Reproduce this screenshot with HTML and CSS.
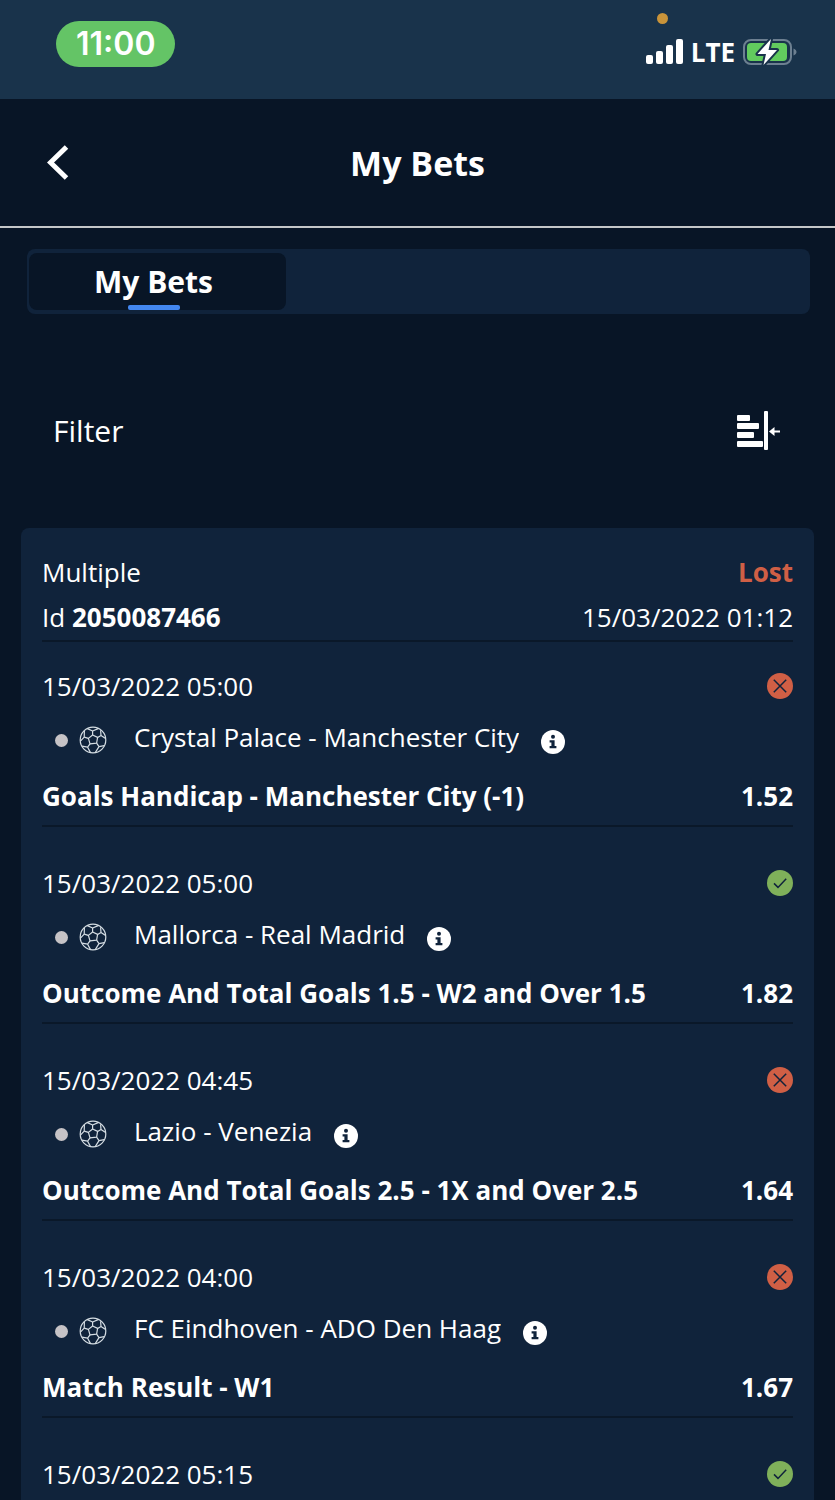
FILE: index.html
```html
<!DOCTYPE html>
<html lang="en">
<head>
    <meta charset="UTF-8">
    <meta name="viewport" content="width=device-width, initial-scale=1.0">
    <title>My Bets</title>
    <link rel="stylesheet" href="styles.css">
</head>
<body>

    <!-- shared icons -->
    <svg class="sprite" width="0" height="0" aria-hidden="true">
        <symbol id="ball" viewBox="0 0 28 28">
            <g fill="none" stroke="currentColor" stroke-width="1.2" stroke-linejoin="round">
                <circle cx="14" cy="14" r="12.8"/>
                <path d="M9.4 12.4L13.6 9L18.6 11.4L17.6 17.2L11 17.8Z"/>
                <path d="M13.6 9V5M18.6 11.4L22 9.400M17.6 17.2L20 20.600M11 17.8L8.600 21.200M9.4 12.4L5.200 11.200"/>
                <path d="M8.400 2.600L13.600 5L19.200 2.600M22 9.400L21.600 4.200M22 9.400L26.600 12.600M20 20.600L25.200 19.600M20 20.600L16.400 26.400M8.600 21.200L11.400 26.400M8.600 21.200L3 20.200M5.200 11.200L1.400 15.200M5.200 11.200L5.400 4.800"/>
            </g>
        </symbol>
        <symbol id="info" viewBox="0 0 24 24">
            <circle cx="12" cy="12" r="12" fill="#fff"/>
            <circle cx="12" cy="6.8" r="2" fill="#10233b"/>
            <path d="M8.600 10.2H13.6V16H15.4V18.2H8.600V16H10.4V12.4H8.600Z" fill="#10233b"/>
        </symbol>
        <symbol id="lost" viewBox="0 0 26 26">
            <circle cx="13" cy="13" r="13" fill="#d05f45"/>
            <path d="M6.8 6.8L19.2 19.2M19.2 6.8L6.8 19.2" stroke="#10233b" stroke-width="1.5"/>
        </symbol>
        <symbol id="won" viewBox="0 0 26 26">
            <circle cx="13" cy="13" r="13" fill="#7fb05a"/>
            <path d="M7 13.4L11 17.4L19.2 8.8" fill="none" stroke="#10233b" stroke-width="1.5"/>
        </symbol>
    </svg>

    <div class="status-bar">
        <div class="clock">11:00</div>
        <div class="status-right">
            <span class="mic-dot"></span>
            <svg class="signal" width="37" height="26" viewBox="0 0 37 26" fill="#fff">
                <rect x="0" y="16" width="7" height="9" rx="2"/>
                <rect x="10" y="12" width="7" height="13" rx="2"/>
                <rect x="20" y="6" width="7" height="19" rx="2"/>
                <rect x="30" y="0" width="7" height="25" rx="2"/>
            </svg>
            <span class="network">LTE</span>
            <svg class="battery" width="54" height="30" viewBox="0 0 54 30">
                <rect x="1" y="3" width="47" height="24" rx="7" fill="none" stroke="#6d8091" stroke-width="2"/>
                <path d="M50.5 11.5V18.5C54.5 17 54.5 13 50.5 11.5Z" fill="#6d8091"/>
                <rect x="4" y="6" width="40" height="18" rx="4" fill="#62cb5e"/>
                <path d="M28 2L14.5 17H23L20.5 28L34 13H25.5Z" fill="#fff" stroke="#19334b" stroke-width="4" stroke-linejoin="round" paint-order="stroke"/>
            </svg>
        </div>
    </div>

    <header class="header">
        <button class="back" type="button" aria-label="Back">
            <svg width="22" height="36" viewBox="0 0 22 36">
                <path d="M19.5 2L3.5 17.500L19.5 33" fill="none" stroke="#fff" stroke-width="5"/>
            </svg>
        </button>
        <h1>My Bets</h1>
    </header>

    <nav class="tabs">
        <button class="tab active" type="button">My Bets</button>
    </nav>

    <div class="filter">
        <span id="filter-label">Filter</span>
        <button class="filter-button" type="button" aria-labelledby="filter-label">
            <svg width="44" height="40" viewBox="0 0 44 40" fill="#fff">
                <rect x="0" y="4" width="13" height="6" rx="1"/>
                <rect x="0" y="12" width="22" height="6" rx="1"/>
                <rect x="0" y="21" width="17" height="6" rx="1"/>
                <rect x="0" y="30" width="26" height="6" rx="1"/>
                <rect x="27" y="0" width="4" height="39" rx="1"/>
                <path d="M32 20.5L37.5 16V19.5H43V21.5H37.5V25Z"/>
            </svg>
        </button>
    </div>

    <main class="bet-card">
        <div class="bet-summary">
            <div class="row">
                <span>Multiple</span>
                <span class="result">Lost</span>
            </div>
            <div class="row">
                <span>Id <b>2050087466</b></span>
                <span>15/03/2022 01:12</span>
            </div>
        </div>

        <ul class="events">
            <li class="event">
                <div class="row">
                    <span>15/03/2022 05:00</span>
                    <svg class="mark" role="img" aria-label="Lost"><use href="#lost"/></svg>
                </div>
                <div class="match">
                    <span class="dot"></span>
                    <svg class="ball"><use href="#ball"/></svg>
                    <span class="teams">Crystal Palace - Manchester City</span>
                    <button class="info" type="button" aria-label="Match info"><svg><use href="#info"/></svg></button>
                </div>
                <div class="row pick">
                    <span>Goals Handicap - Manchester City (-1)</span>
                    <span>1.52</span>
                </div>
            </li>
            <li class="event">
                <div class="row">
                    <span>15/03/2022 05:00</span>
                    <svg class="mark" role="img" aria-label="Won"><use href="#won"/></svg>
                </div>
                <div class="match">
                    <span class="dot"></span>
                    <svg class="ball"><use href="#ball"/></svg>
                    <span class="teams">Mallorca - Real Madrid</span>
                    <button class="info" type="button" aria-label="Match info"><svg><use href="#info"/></svg></button>
                </div>
                <div class="row pick">
                    <span>Outcome And Total Goals 1.5 - W2 and Over 1.5</span>
                    <span>1.82</span>
                </div>
            </li>
            <li class="event">
                <div class="row">
                    <span>15/03/2022 04:45</span>
                    <svg class="mark" role="img" aria-label="Lost"><use href="#lost"/></svg>
                </div>
                <div class="match">
                    <span class="dot"></span>
                    <svg class="ball"><use href="#ball"/></svg>
                    <span class="teams">Lazio - Venezia</span>
                    <button class="info" type="button" aria-label="Match info"><svg><use href="#info"/></svg></button>
                </div>
                <div class="row pick">
                    <span>Outcome And Total Goals 2.5 - 1X and Over 2.5</span>
                    <span>1.64</span>
                </div>
            </li>
            <li class="event">
                <div class="row">
                    <span>15/03/2022 04:00</span>
                    <svg class="mark" role="img" aria-label="Lost"><use href="#lost"/></svg>
                </div>
                <div class="match">
                    <span class="dot"></span>
                    <svg class="ball"><use href="#ball"/></svg>
                    <span class="teams">FC Eindhoven - ADO Den Haag</span>
                    <button class="info" type="button" aria-label="Match info"><svg><use href="#info"/></svg></button>
                </div>
                <div class="row pick">
                    <span>Match Result - W1</span>
                    <span>1.67</span>
                </div>
            </li>
            <li class="event">
                <div class="row">
                    <span>15/03/2022 05:15</span>
                    <svg class="mark" role="img" aria-label="Won"><use href="#won"/></svg>
                </div>
            </li>
        </ul>
    </main>

</body>
</html>
```
FILE: styles.css
```css
* {
    box-sizing: border-box;
}

body {
    margin: 0;
    min-height: 100vh;
    display: flex;
    flex-direction: column;
    background-color: #081526;
    color: #fff;
    font-family: "Open Sans", "Noto Sans", sans-serif;
    font-size: 26px;
    line-height: 36px;
}

button {
    padding: 0;
    border: 0;
    background: none;
    color: inherit;
    font: inherit;
    cursor: pointer;
}

svg {
    display: block;
    flex-shrink: 0;
}

.sprite {
    position: absolute;
}

/* phone status bar */
.status-bar {
    display: flex;
    justify-content: space-between;
    align-items: flex-start;
    height: 99px;
    padding: 21px 38px 0 56px;
    background-color: #19334b;
}

.clock {
    padding: 0 20px;
    border-radius: 23px;
    background-color: #64c466;
    font-family: Inter, sans-serif;
    font-size: 32px;
    font-weight: 600;
    line-height: 46px;
}

.status-right {
    position: relative;
    display: flex;
    align-items: center;
    gap: 8px;
    margin-top: 13px;
}

.mic-dot {
    position: absolute;
    top: -21px;
    left: 11px;
    width: 11px;
    height: 11px;
    border-radius: 50%;
    background-color: #c9943a;
}

.network {
    font-size: 26px;
    font-weight: 700;
}

/* page header */
.header {
    display: grid;
    grid-template-columns: 1fr auto 1fr;
    align-items: center;
    height: 129px;
    padding: 0 47px;
    border-bottom: 2px solid #c4c6c8;
}

.header h1 {
    margin: 0;
    font-size: 34px;
    font-weight: 700;
}

.back {
    justify-self: start;
}

.tabs {
    display: flex;
    height: 65px;
    margin: 21px 25px 0 27px;
    padding: 4px 2px;
    border-radius: 8px;
    background-color: #10233b;
}

.tab {
    display: flex;
    flex-direction: column;
    align-items: center;
    justify-content: flex-end;
    gap: 5px;
    width: 33%;
    padding-right: 8px;
    border-radius: 8px;
    font-size: 30px;
    font-weight: 700;
}

.tab.active {
    background-color: #081526;
}

.tab.active::after {
    content: "";
    width: 52px;
    height: 5px;
    border-radius: 2px;
    background-color: #4387f0;
}

.filter {
    display: flex;
    justify-content: space-between;
    align-items: center;
    height: 40px;
    margin: 97px 54px 77px 53px;
    font-size: 30px;
}

/* bet slip */
.bet-card {
    flex: 1;
    margin: 0 21px;
    padding: 26px 21px 0;
    border-radius: 8px 8px 0 0;
    background-color: #10233b;
}

.row {
    display: flex;
    justify-content: space-between;
    align-items: center;
}

.bet-summary {
    display: grid;
    gap: 9px;
    padding-bottom: 5px;
    border-bottom: 2px solid #0a1829;
}

.result {
    color: #d05f45;
    font-weight: 700;
}

.events {
    display: grid;
    gap: 12px;
    margin: 0;
    padding: 0;
    list-style: none;
}

.event {
    padding: 26px 0 11px;
    border-bottom: 2px solid #0a1829;
}

.event:last-child {
    padding-bottom: 0;
    border-bottom: 0;
}

.mark {
    width: 26px;
    height: 26px;
}

.match {
    display: flex;
    align-items: center;
    height: 36px;
    margin: 18px 0 20px;
    padding-left: 13px;
}

.dot {
    width: 13px;
    height: 13px;
    border-radius: 50%;
    background-color: #c6c3c6;
}

.ball {
    width: 28px;
    height: 28px;
    margin: 0 27px 0 11px;
    color: #d5dde3;
}

.teams {
    margin-bottom: 5px;
    line-height: 31px;
    overflow: hidden;
}

.info {
    margin: 4px 0 0 22px;
}

.info svg {
    width: 24px;
    height: 24px;
}

.pick {
    font-weight: 700;
}
```
